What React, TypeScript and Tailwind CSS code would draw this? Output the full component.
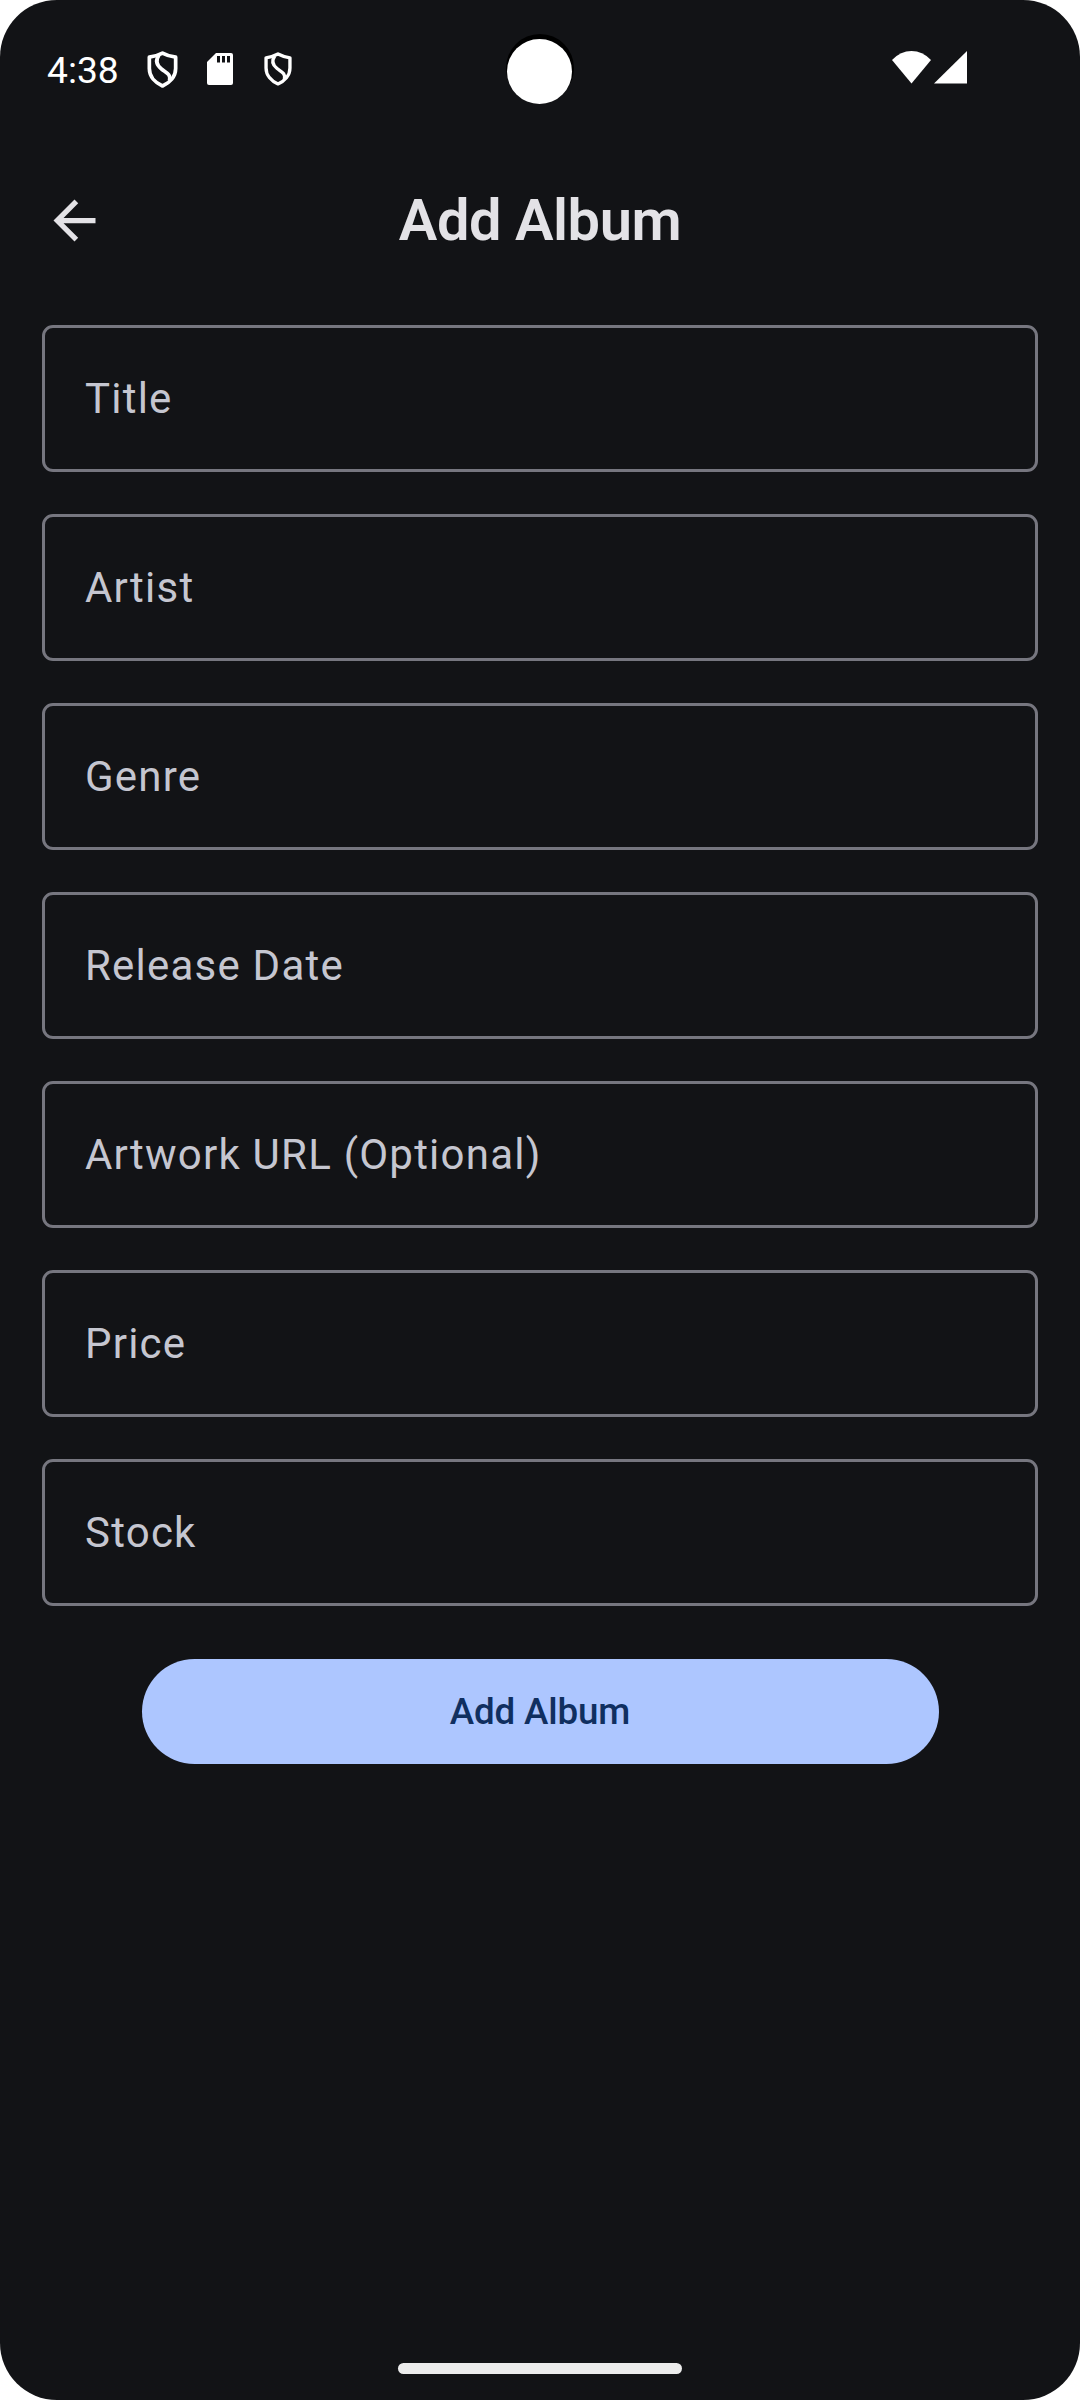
const fields = ['Title', 'Artist', 'Genre', 'Release Date', 'Artwork URL (Optional)', 'Price', 'Stock'];

function Shield({ className }: { className: string }) {
  return (
    <svg viewBox="0 0 30 36" className={className} fill="none" stroke="#fff" strokeWidth="3.6" strokeLinejoin="round">
      <path d="M15 2 Q9.500 5 2.200 6 V17 C2.200 25 8 31 15 34 C22 31 27.800 25 27.800 17 V6 Q20.500 5 15 2Z" />
      <path d="M11.500 4 C8 9 9 13.500 14 17.500 C18.500 21 23.500 22.500 21.800 29" />
    </svg>
  );
}

function StatusBar() {
  return (
    <header className="flex h-[142px] items-start pl-[47px] pr-[113px] text-white">
      <span className="mt-[49px] w-[71px] text-[37.2px] leading-[43px]">4:38</span>
      <Shield className="ml-[29px] mt-[51px] h-[37px] w-[31px]" />
      <svg viewBox="0 0 26 32" className="ml-[29px] mt-[53px] h-8 w-[26px]">
        <path d="M9 0H24Q26 0 26 2V30Q26 32 24 32H2Q0 32 0 30V9Z" fill="#fff" />
        <path d="M10 3h3v6.500h-3zM15 3h3v6.500h-3zM20 3h3v6.500h-3z" fill="#121316" />
      </svg>
      <Shield className="ml-[31px] mt-[52px] h-[34px] w-7" />
      <svg viewBox="0 0 75 33" className="ml-auto mt-[51px] h-[33px] w-[75px]" fill="#fff">
        <path d="M0 9 Q8.500 0 19.500 0 Q30.500 0 39 9 L19.500 32.500Z" />
        <path d="M75 0V32.500H42Z" />
      </svg>
    </header>
  );
}

export default function App() {
  return (
    <div className="h-[2400px] w-[1080px] bg-white">
      <div className="relative flex h-full flex-col overflow-hidden rounded-[57px] bg-[#121316] font-['Roboto',sans-serif]">
        <StatusBar />
        <div className="absolute left-[506px] top-[34px] size-[68px] rounded-full bg-black" />
        <div className="absolute left-[507px] top-[39px] size-[65px] rounded-full bg-white" />

        <div className="grid h-[157px] grid-cols-[150px_1fr_150px] items-center">
          <svg viewBox="0 0 24 24" className="ml-[43px] size-[63px]" fill="#e3e2e6">
            <path d="M20 11H7.830l5.590-5.590L12 4l-8 8 8 8 1.410-1.410L7.830 13H20v-2z" />
          </svg>
          <h1 className="pb-0.5 text-center text-[57.75px] font-semibold leading-[74px] tracking-[-0.45px] text-[#e3e2e6]">
            Add Album
          </h1>
        </div>

        <main className="flex flex-col items-center gap-[42px] px-[42px] pt-[26px]">
          {fields.map((label) => (
            <div
              key={label}
              className="flex h-[147px] w-full items-center rounded-[11px] border-3 border-[#76767f] px-[40px] text-[42px] tracking-[1.22px] text-[#c5c6d0]"
            >
              {label}
            </div>
          ))}
          <button className="mt-[11px] h-[105px] w-[797px] rounded-full bg-[#adc6ff] text-[36.75px] font-medium tracking-[-0.15px] text-[#102f60]">
            Add Album
          </button>
        </main>

        <div className="mx-auto mb-[26px] mt-auto h-[11px] w-[284px] rounded-full bg-[#ececec]" />
      </div>
    </div>
  );
}
